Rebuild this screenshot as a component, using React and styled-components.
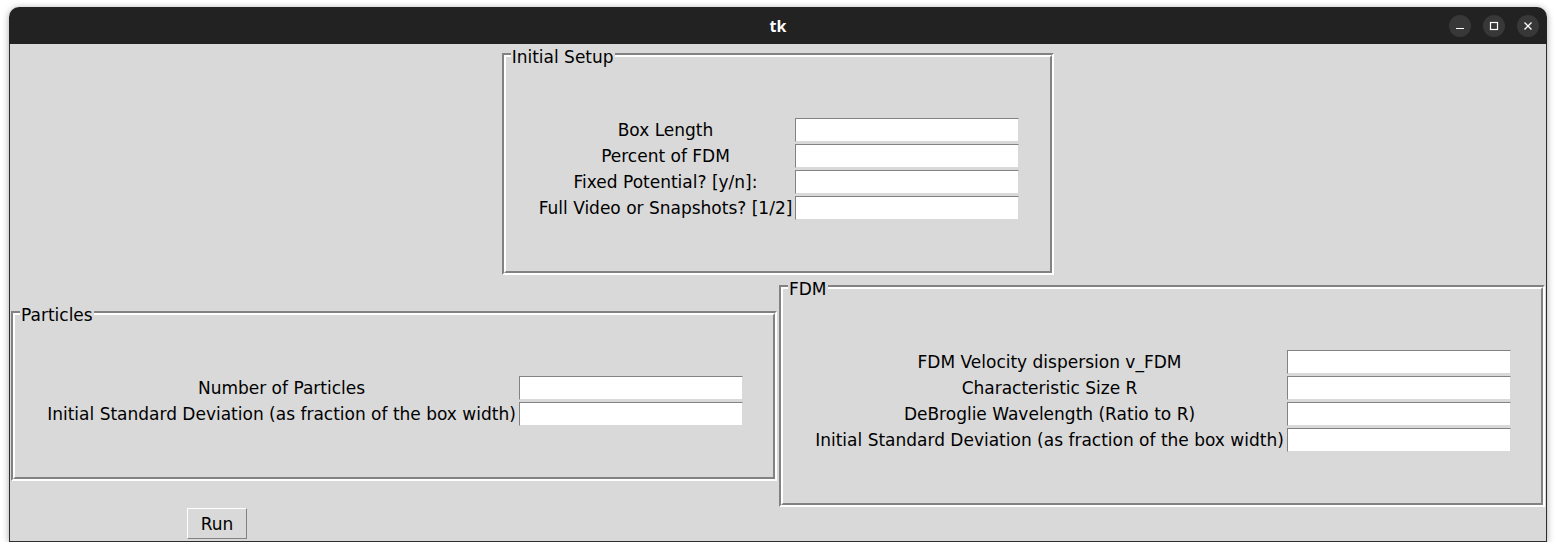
import styled, {createGlobalStyle} from "styled-components";

const GlobalStyle = createGlobalStyle`
  body {
    margin: 0;
    background: #ffffff;
    font-family: "DejaVu Sans", "Liberation Sans", sans-serif;
  }
`;

const Window = styled.div`
  margin: 7px 0 0 9px;
  width: 1538px;
  border-radius: 10px 10px 0 0;
  overflow: hidden;
  box-shadow: 0 1px 7px rgba(0, 0, 0, 0.35);
`;

const TitleBar = styled.div`
  height: 37px;
  background: #222222;
  display: grid;
  grid-template-columns: 1fr auto 1fr;
  align-items: center;
`;

const Title = styled.div`
  grid-column: 2;
  color: #ffffff;
  font-family: "Noto Sans", "DejaVu Sans", sans-serif;
  font-weight: 700;
  font-size: 16px;
`;

const Controls = styled.div`
  justify-self: end;
  display: flex;
  gap: 12px;
  padding-right: 8px;
`;

const ControlButton = styled.div`
  width: 22px;
  height: 22px;
  border-radius: 50%;
  background: #383838;
  display: flex;
  align-items: center;
  justify-content: center;
`;

const Content = styled.div`
  background: #d9d9d9;
  border: 1px solid #2e2e2e;
  border-top: none;
  display: grid;
  grid-template-columns: minmax(0, 1fr) minmax(0, 1fr);
  color: #000000;
  font-size: 17px;
`;

const Group = styled.div`
  position: relative;
  padding-top: 8px;
  margin: 1px;
  grid-column: ${(p) => (p.$span ? "1 / -1" : "auto")};
  justify-self: ${(p) => (p.$span ? "center" : "stretch")};
  align-self: center;
`;

const Legend = styled.div`
  position: absolute;
  top: 2px;
  left: 9px;
  padding: 0 1px;
  line-height: 20px;
  background: #d9d9d9;
`;

const Groove = styled.div`
  border: 2px solid;
  border-color: #828282 #ffffff #ffffff #828282;
`;

const GrooveInner = styled.div`
  border: 2px solid;
  border-color: #ffffff #828282 #828282 #ffffff;
  padding: 60px 30px 50px 31px;
  display: flex;
  justify-content: center;
`;

const FieldGrid = styled.div`
  display: grid;
  grid-template-columns: auto auto;
  align-items: center;
`;

const FieldLabel = styled.div`
  text-align: center;
  padding: 0 2px;
  line-height: 20px;
  white-space: nowrap;
`;

const Entry = styled.input`
  box-sizing: border-box;
  width: 224px;
  height: 24px;
  margin: 1px;
  padding: 0 2px;
  background: #ffffff;
  border: 1px solid;
  border-color: #828282 #d9d9d9 #d9d9d9 #828282;
  outline: none;
  font: inherit;
`;

const RunButton = styled.button`
  grid-column: 1;
  justify-self: start;
  margin: 0 0 2px 177px;
  width: 60px;
  height: 31px;
  background: #d9d9d9;
  border: 1px solid;
  border-color: #ffffff #828282 #828282 #ffffff;
  font-family: inherit;
  font-size: 17px;
  color: #000000;
  padding: 0;
`;

const LabelFrame = ({title, fields, span}) => (
    <Group $span={span}>
        <Legend>{title}</Legend>
        <Groove>
            <GrooveInner>
                <FieldGrid>
                    {fields.map((f) => [
                        <FieldLabel key={f + "-l"}>{f}</FieldLabel>,
                        <Entry key={f + "-e"} defaultValue=""/>
                    ])}
                </FieldGrid>
            </GrooveInner>
        </Groove>
    </Group>
)

const setupFields = [
    "Box Length",
    "Percent of FDM",
    "Fixed Potential? [y/n]:",
    "Full Video or Snapshots? [1/2]"
];
const particleFields = [
    "Number of Particles",
    "Initial Standard Deviation (as fraction of the box width)"
];
const fdmFields = [
    "FDM Velocity dispersion v_FDM",
    "Characteristic Size R",
    "DeBroglie Wavelength (Ratio to R)",
    "Initial Standard Deviation (as fraction of the box width)"
];

const App = () => {
    return (
        <>
            <GlobalStyle/>
            <Window>
                <TitleBar>
                    <Title>tk</Title>
                    <Controls>
                        <ControlButton>
                            <svg width="10" height="10" viewBox="0 0 10 10">
                                <path d="M1 7.5h8" stroke="#fff" strokeWidth="1.2"/>
                            </svg>
                        </ControlButton>
                        <ControlButton>
                            <svg width="10" height="10" viewBox="0 0 10 10">
                                <rect x="1.5" y="1.5" width="7" height="7" fill="none" stroke="#fff" strokeWidth="1.2"/>
                            </svg>
                        </ControlButton>
                        <ControlButton>
                            <svg width="10" height="10" viewBox="0 0 10 10">
                                <path d="M1.5 1.5l7 7M8.5 1.5l-7 7" stroke="#fff" strokeWidth="1.3"/>
                            </svg>
                        </ControlButton>
                    </Controls>
                </TitleBar>
                <Content>
                    <LabelFrame title="Initial Setup" fields={setupFields} span/>
                    <LabelFrame title="Particles" fields={particleFields}/>
                    <LabelFrame title="FDM" fields={fdmFields}/>
                    <RunButton>Run</RunButton>
                </Content>
            </Window>
        </>
    )
}
export default App
